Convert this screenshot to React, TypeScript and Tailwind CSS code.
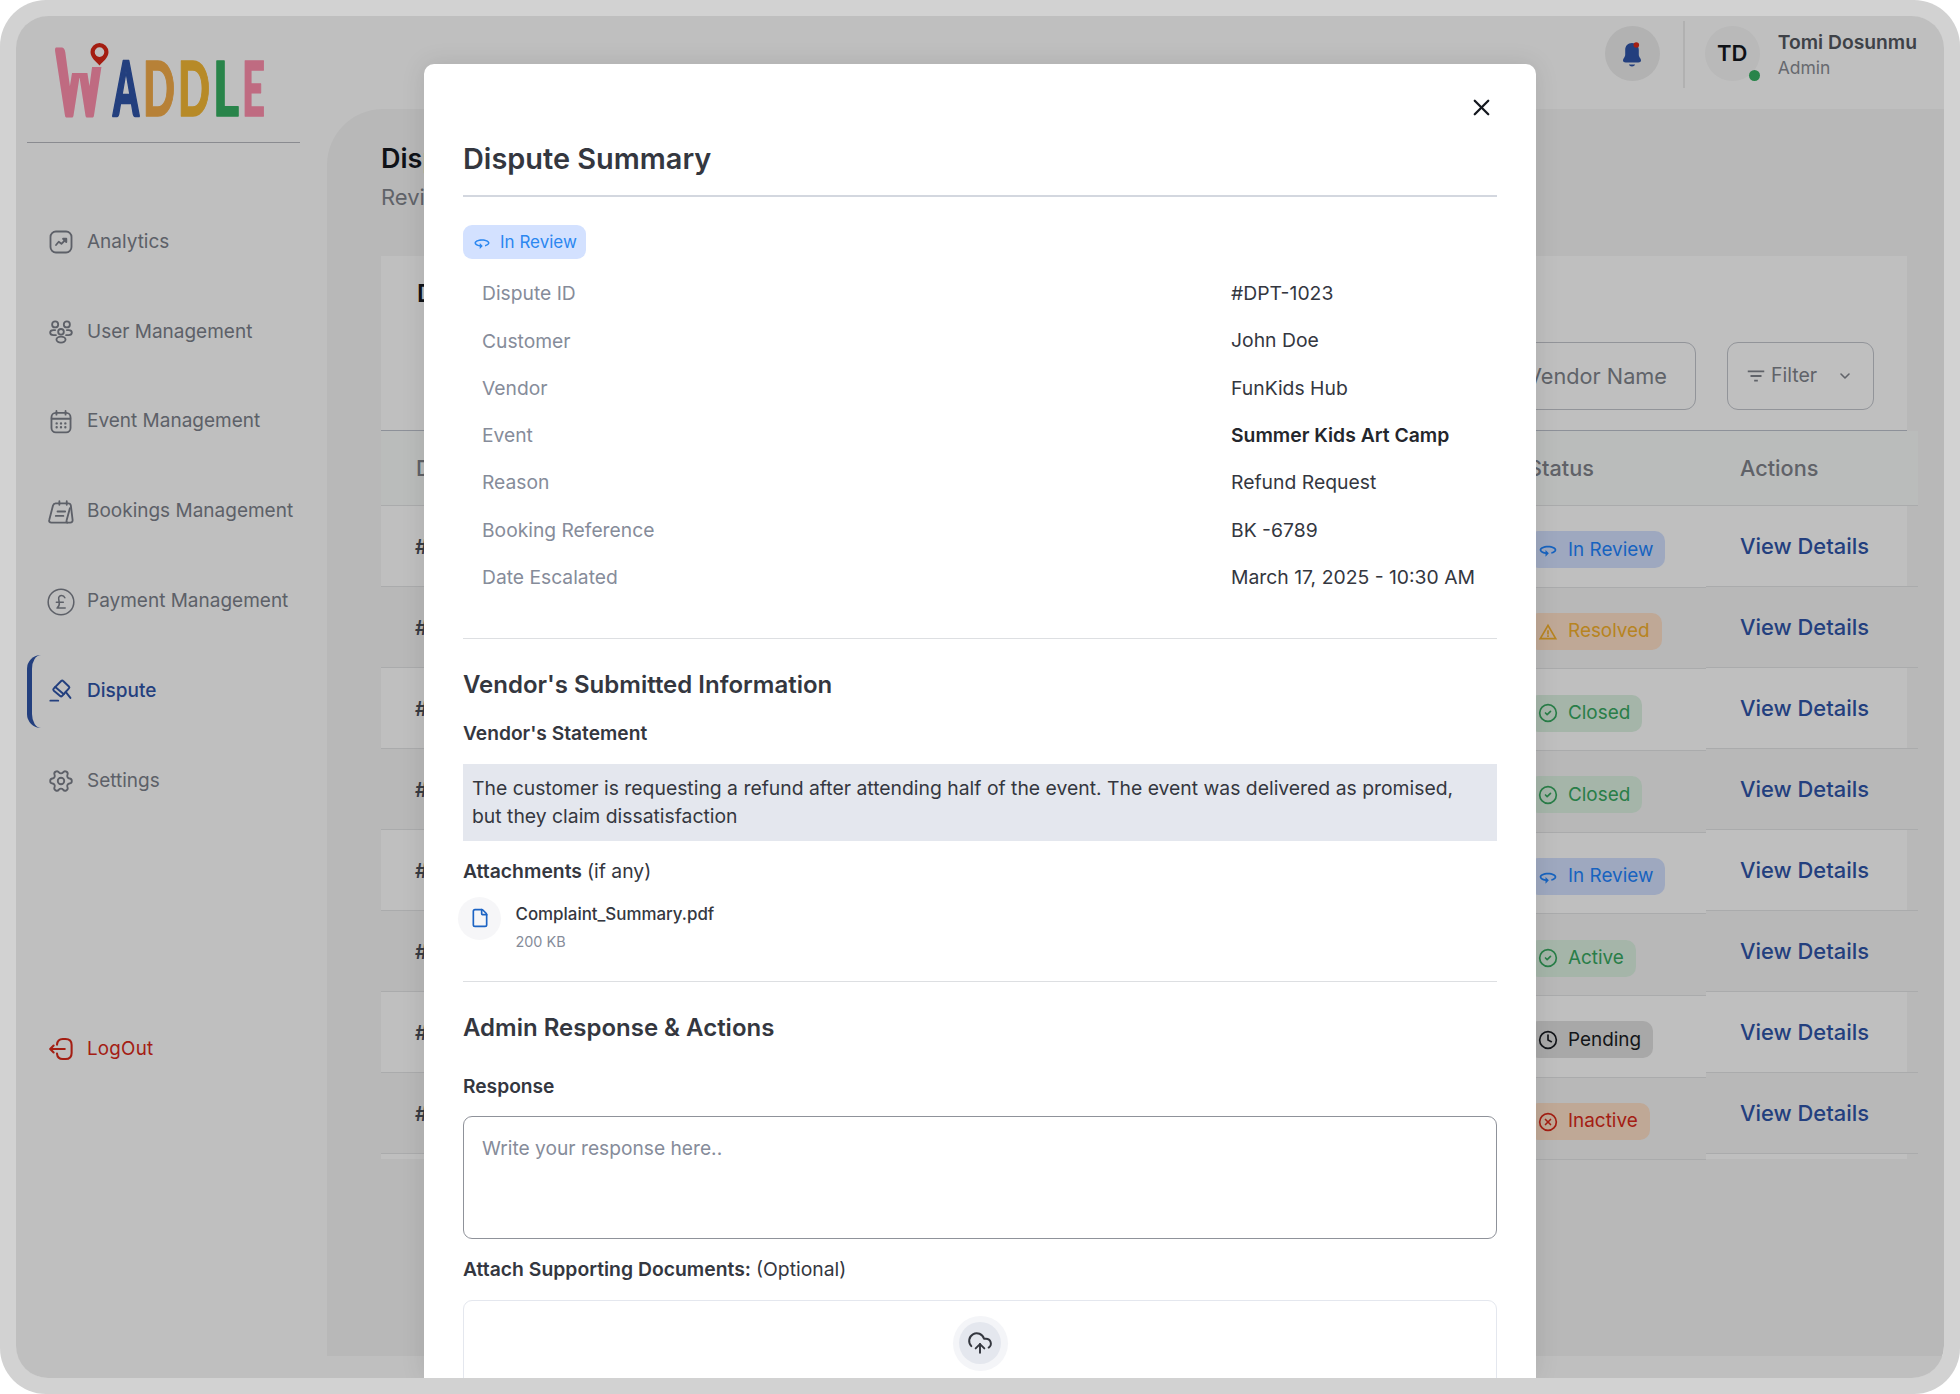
import React from 'react';
import { ChevronDown, CircleCheck, CircleX, Clock, CloudUpload, File, Settings, X } from 'lucide-react';
import { Md360, MdFilterList, MdWarningAmber } from 'react-icons/md';

type Status = 'In Review' | 'Resolved' | 'Closed' | 'Active' | 'Pending' | 'Inactive';

const STATUSES: Status[] = ['In Review', 'Resolved', 'Closed', 'Closed', 'In Review', 'Active', 'Pending', 'Inactive'];

const DETAILS = [
  { label: 'Dispute ID', value: '#DPT-1023' },
  { label: 'Customer', value: 'John Doe' },
  { label: 'Vendor', value: 'FunKids Hub' },
  { label: 'Event', value: 'Summer Kids Art Camp', strong: true },
  { label: 'Reason', value: 'Refund Request' },
  { label: 'Booking Reference', value: 'BK -6789' },
  { label: 'Date Escalated', value: 'March 17, 2025 - 10:30 AM' },
];

const svgProps = {
  viewBox: '0 0 24 24',
  fill: 'none',
  stroke: 'currentColor',
  strokeWidth: 1.7,
  strokeLinecap: 'round' as const,
  strokeLinejoin: 'round' as const,
};

const AnalyticsIcon = () => (
  <svg {...svgProps} className="w-[26px] h-[26px]">
    <rect x="2.3" y="2.3" width="19.4" height="19.4" rx="5" />
    <path d="M7.4 14.8l2.5-3 2.5 1.9 4-4" />
    <path fill="currentColor" d="M13.9 9h3v3z" />
  </svg>
);

const UsersIcon = () => (
  <svg {...svgProps} className="w-[26px] h-[26px]">
    <circle cx="6.6" cy="5" r="2.8" />
    <circle cx="17.4" cy="5" r="2.8" />
    <circle cx="12" cy="11.8" r="2.6" />
    <ellipse cx="12" cy="19" rx="4.2" ry="2.8" />
    <path d="M7.3 14.9H5.1c-2 0-3.1-1.1-3.1-2.4s1.2-2.3 3-2.3h1.6M16.7 14.9h2.2c2 0 3.1-1.1 3.1-2.4s-1.2-2.3-3-2.3h-1.6" />
  </svg>
);

const EventIcon = () => (
  <svg {...svgProps} className="w-[26px] h-[26px]">
    <rect x="3.2" y="3.6" width="17.6" height="18" rx="4" />
    <path d="M7.8 1.8v3.4M16.2 1.8v3.4M3.4 9h17.2" />
    <path strokeWidth="2.2" d="M8 13.3h.01M12 13.3h.01M16 13.3h.01M8 16.9h.01M12 16.9h.01M16 16.9h.01" />
  </svg>
);

const BookingIcon = () => (
  <svg {...svgProps} className="w-[26px] h-[26px]">
    <path d="M7 4h11.6c1.6 0 2.3.8 2.5 2.1l1.6 13.1c.2 1.6-.7 2.6-2.2 2.6H3.2c-1.7 0-2.5-1-2-2.6L4.6 6c.4-1.3 1.1-2 2.4-2z" />
    <path d="M10.5 2v3.4M17.3 2v3.4M8.8 11.5h7M7.2 15.6h7M20.2 8.5l-3 11.2c-.4 1.3-.3 1.7.6 2.1" />
  </svg>
);

const PaymentIcon = () => (
  <svg {...svgProps} strokeWidth="1.3" className="w-7 h-7">
    <circle cx="12" cy="12" r="11" />
    <path d="M15.3 8.3c-.6-1.4-1.7-1.8-2.8-1.8-1.7 0-2.7 1.2-2.5 2.9l.5 3.1c.3 2-.3 3.5-1.9 4.7h7M8 12.2h6" />
  </svg>
);

const GavelIcon = () => (
  <svg {...svgProps} strokeWidth="1.8" className="w-[26px] h-[26px]">
    <path d="M12.2 2.8q.9-.9 1.8 0l5.3 5q.9.9 0 1.8l-6.2 6.9q-.9.9-1.9.1l-5.8-4.9q-1-.9-.2-1.9z" />
    <path d="M6.7 8.3l7.9 6.6M16.3 12.8l4.4 5.6M2.2 20.9h7.2" />
  </svg>
);

const LogoutIcon = () => (
  <svg {...svgProps} strokeWidth="1.9" className="w-[26px] h-[26px]">
    <path d="M8.3 8c.3-3.6 2-5.2 5.3-5.2h2.6c3.7 0 5.6 1.9 5.6 5.6v7.2c0 3.7-1.9 5.6-5.6 5.6h-2.6c-3.3 0-5-1.6-5.3-5" />
    <path d="M15.5 12H2.3M5.2 8.8L2 12l3.2 3.2" />
  </svg>
);

const BellIcon = () => (
  <svg viewBox="0 0 24 28" className="w-6 h-7">
    <path fill="#2f55a9" d="M12 3c-4.3 0-6.8 3-6.8 7v4.500c0 1.400-.500 2.300-1.300 3.600-.600 1-.900 1.600-.900 2.400 0 1.300 1.100 2 2.700 2h12.600c1.600 0 2.700-.700 2.700-2 0-.800-.300-1.400-.900-2.400-.800-1.300-1.300-2.200-1.300-3.600V10c0-4-2.500-7-6.800-7z" />
    <path fill="#2f55a9" d="M8.800 24.500h6.400c-.600 1.300-1.700 2-3.200 2s-2.600-.700-3.200-2z" />
    <circle cx="16.300" cy="5" r="2.800" fill="#db2819" />
  </svg>
);

const Logo = () => (
  <svg viewBox="0 0 220 80" className="w-[220px] h-20 overflow-visible font-['Lato']" fontWeight="900" fontSize="76" strokeWidth="1.5" strokeLinejoin="round">
    <defs>
      {/* middle peak and right stem of the W stay lower than the left one */}
      <clipPath id="stem">
        <path d="M-4 0H18V34H38V28H62V84H-4z" />
      </clipPath>
    </defs>
    <g clipPath="url(#stem)">
      <text x="5" y="75.5" fontSize="89" textLength="47" lengthAdjust="spacingAndGlyphs" fill="#ff8fad" stroke="#ff8fad" strokeWidth="5">W</text>
    </g>
    <text x="62" y="76.5" textLength="26" lengthAdjust="spacingAndGlyphs" fill="#2f55a9" stroke="#2f55a9" strokeWidth="2.5">A</text>
    <text x="92" y="76.5" textLength="32" lengthAdjust="spacingAndGlyphs" fill="#f5ad4a" stroke="#f5ad4a">D</text>
    <text x="127" y="76.5" textLength="32" lengthAdjust="spacingAndGlyphs" fill="#f5b835" stroke="#f5b835">D</text>
    <text x="162" y="76.5" textLength="26" lengthAdjust="spacingAndGlyphs" fill="#37b163" stroke="#37b163">L</text>
    <text x="191" y="76.5" textLength="23" lengthAdjust="spacingAndGlyphs" fill="#ff8fad" stroke="#ff8fad">E</text>
    <path fill="#db2819" fillRule="evenodd" d="M48.5 4a9 9 0 0 0-9 9c0 5.500 5 9 9 13.500 4-4.500 9-8 9-13.500a9 9 0 0 0-9-9zm0 4.300a4.800 4.800 0 1 1 0 9.600 4.800 4.800 0 0 1 0-9.600z" />
  </svg>
);

const NAV = [
  { label: 'Analytics', icon: <AnalyticsIcon /> },
  { label: 'User Management', icon: <UsersIcon /> },
  { label: 'Event Management', icon: <EventIcon /> },
  { label: 'Bookings Management', icon: <BookingIcon /> },
  { label: 'Payment Management', icon: <PaymentIcon /> },
  { label: 'Dispute', icon: <GavelIcon />, active: true },
  { label: 'Settings', icon: <Settings className="w-[26px] h-[26px] rotate-90" strokeWidth={1.7} /> },
];

const getStatusStyles = (status: Status) => {
  switch (status) {
    case 'In Review':
      return { badge: 'bg-[#d3e1ff] text-[#1f84ff]', icon: <Md360 className="w-5 h-5" /> };
    case 'Resolved':
      return { badge: 'bg-[#ffe0c8] text-[#f5b02c]', icon: <MdWarningAmber className="w-5 h-5" /> };
    case 'Pending':
      return { badge: 'bg-[#e0e0e0] text-[#1a1d23]', icon: <Clock className="w-5 h-5" /> };
    case 'Inactive':
      return { badge: 'bg-[#ffe0c8] text-[#db2819]', icon: <CircleX className="w-5 h-5" /> };
    default:
      return { badge: 'bg-[#dcf2e2] text-[#37a860]', icon: <CircleCheck className="w-5 h-5" /> };
  }
};

const Sidebar = () => (
  <aside className="w-[311px] shrink-0 pl-[11px]">
    <div className="h-[127px] w-[273px] border-b border-[#b8bac0] pt-[23px] pl-[24px]">
      <Logo />
    </div>
    <nav className="pt-[54px]">
      {NAV.map((item) => (
        <div key={item.label} className="h-[89.9px] flex items-center">
          <div
            className={`h-[73px] w-full flex items-center gap-2 text-[19px] ${
              item.active ? 'border-l-[5px] border-[#2f55a9] rounded-l-[14px] pl-[10px] text-[#2f55a9] font-medium' : 'pl-[15px] text-[#7d818b]'
            }`}
          >
            <span className="w-[38px] flex justify-center">{item.icon}</span>
            <span className="-ml-px">{item.label}</span>
          </div>
        </div>
      ))}
    </nav>
    <div className="mt-[178px] h-[90px] flex items-center gap-2 pl-[15px] text-[18.800px] text-[#db2819]">
      <span className="w-[38px] flex justify-center"><LogoutIcon /></span>
      <span className="-ml-px tracking-[0.012em]">LogOut</span>
    </div>
  </aside>
);

const TopBar = () => (
  <header className="h-[93px] pt-[5px] pr-[27px] flex items-start justify-end">
    <div className="mt-[5px] mr-[23px] w-[55px] h-[55px] rounded-full bg-[#eeeeee] flex items-center justify-center">
      <BellIcon />
    </div>
    <div className="w-0.5 h-[67px] bg-[#ededed] mr-5" />
    <div className="relative mt-[5px] w-[55px] h-[55px] rounded-full bg-[#f7f7f7] flex items-center justify-center text-[22px] font-semibold text-[#14181f]">
      TD
      <span className="absolute right-0 bottom-0 w-[11px] h-[11px] rounded-full bg-[#37b163]" />
    </div>
    <div className="ml-[18px] mt-[7px]">
      <div className="h-7 leading-7 text-[19.300px] font-semibold text-[#53575f]">Tomi Dosunmu</div>
      <div className="h-6 leading-6 text-[17.500px] text-[#8a8d94]">Admin</div>
    </div>
  </header>
);

const StatusBadge: React.FC<{ status: Status }> = ({ status }) => {
  const styles = getStatusStyles(status);
  return (
    <span className={`h-[37px] inline-flex items-center gap-2.5 pl-2.5 pr-3 rounded-[10px] text-[18.900px] ${styles.badge}`}>
      {styles.icon}
      {status}
    </span>
  );
};

const DisputeTable = () => (
  <section className="w-[1526px] h-[903px] bg-white">
    <div className="h-[175px] border-b border-[#bcc2cc] pl-9 pr-[33px] pt-[16px]">
      <h2 className="h-[42px] leading-[43px] text-[24px] font-semibold text-[#14181f]">Disputes</h2>
      <div className="mt-[28px] flex justify-end gap-[31px]">
        <div className="w-[420px] h-[68px] rounded-[11px] border border-[#c3c6cd] flex items-center justify-end pr-[28px] text-[21.700px] text-[#80848c]">
          Search by Vendor Name
        </div>
        <div className="w-[147px] h-[68px] rounded-[11px] border border-[#c3c6cd] flex items-center pl-[17px] text-[19.500px] text-[#80848c]">
          <MdFilterList className="w-[22px] h-[22px] mr-1" />
          Filter
          <ChevronDown className="w-4 h-4 ml-[20px]" strokeWidth={2.4} />
        </div>
      </div>
    </div>
    <div className="w-[1537px] h-[75px] bg-[#f9fbfa] border-b border-[#e3e4e6] flex items-center text-[21.700px] font-medium text-[#80838b]">
      <span className="w-[1114px] pl-[35px]">Dispute ID</span>
      <span className="w-[211px] pl-[33px]">Status</span>
      <span className="pl-[34px]">Actions</span>
    </div>
    <div className="flex w-[1537px]">
      <div className="w-[1114px]">
        {STATUSES.map((_, i) => (
          <div key={i} className={`h-[81px] flex items-center pl-[34px] pt-px border-b border-[#e3e4e6] text-[20px] font-semibold text-[#4b4f58] ${i % 2 ? 'bg-[#f6f6f6]' : ''}`}>
            #DPT-1023
          </div>
        ))}
      </div>
      <div className="w-[211px]">
        {STATUSES.map((status, i) => (
          <div key={i} className={`h-[81.700px] flex items-center pl-[33px] pt-[7px] border-b border-[#e3e4e6] ${i % 2 ? 'bg-[#f6f6f6]' : ''}`}>
            <StatusBadge status={status} />
          </div>
        ))}
      </div>
      <div className="w-[212px]">
        {STATUSES.map((_, i) => (
          <div key={i} className={`h-[81px] flex items-center pl-[34px] pt-px border-b border-[#e3e4e6] text-[21.900px] font-medium text-[#2f55a9] ${i % 2 ? 'bg-[#f6f6f6]' : ''}`}>
            View Details
          </div>
        ))}
      </div>
    </div>
  </section>
);

const DisputeModal = () => (
  <div className="absolute left-[408px] top-12 w-[1112px] h-[1314px] overflow-hidden rounded-t-[10px] bg-white px-[39px] text-[19.350px] text-[#34373f] shadow-[0_0_24px_rgba(0,0,0,0.100)]">
    <div className="h-[59px] pt-[28px] pr-0.5 flex items-center justify-end">
      <X className="w-[27px] h-[27px] text-[#14181f]" strokeWidth={2} />
    </div>
    <h1 className="h-[72px] flex items-center text-[28.900px] font-semibold">Dispute Summary</h1>
    <div className="h-0.5 bg-[#d3d7df]" />

    <div className="mt-7 w-[123px] h-[34px] pt-px rounded-[9px] bg-[#d3e1ff] text-[#2b87f0] flex items-center pl-2.5 gap-[9px] text-[17px]">
      <Md360 className="w-[18px] h-[18px]" />
      In Review
    </div>
    <dl className="mt-[11px]">
      {DETAILS.map((row) => (
        <div key={row.label} className="h-[47.300px] flex items-center pl-[19px]">
          <dt className="w-[749px] text-[19.250px] text-[#868c9a]">{row.label}</dt>
          <dd className={row.strong ? 'font-semibold text-[#24262c]' : ''}>{row.value}</dd>
        </div>
      ))}
    </dl>
    <div className="mt-[36.500px] h-px bg-[#dddfe2]" />

    <h2 className="mt-[26px] h-10 flex items-center text-[24px] font-semibold">Vendor's Submitted Information</h2>
    <h3 className="mt-[14px] h-[30px] flex items-center text-[19.200px] font-semibold">Vendor's Statement</h3>
    <p className="mt-[15px] h-[77px] bg-[#e4e7ee] pl-[9px] pt-[10px] leading-7">
      The customer is requesting a refund after attending half of the event. The event was delivered as promised,
      <br />
      but they claim dissatisfaction
    </p>
    <div className="mt-[16px] h-[30px] flex items-center gap-[5px]">
      <span className="font-semibold">Attachments</span> (if any)
    </div>
    <div className="mt-[10px] -ml-[5px] flex">
      <span className="w-[43px] h-[43px] rounded-full bg-[#f6f6f8] flex items-center justify-center text-[#1d64c4]">
        <File className="w-5 h-5" />
      </span>
      <div className="ml-[14.500px] mt-1">
        <div className="h-[26px] leading-[26px] text-[16.900px] font-medium">Complaint_Summary.pdf</div>
        <div className="mt-0.5 h-[26px] leading-[26px] text-[14.400px] text-[#868c9a]">200 KB</div>
      </div>
    </div>
    <div className="mt-[26px] h-px bg-[#dddfe2]" />

    <h2 className="mt-[26px] h-10 flex items-center text-[24px] font-semibold">Admin Response & Actions</h2>
    <label className="mt-[24px] h-[30px] flex items-center text-[19.200px] font-semibold">Response</label>
    <div className="mt-[14px] h-[123px] rounded-[9px] border border-[#8f929a] px-[18px] pt-[17px] text-[#868c9a] text-[19.200px] leading-7">
      Write your response here..
    </div>
    <div className="mt-[16px] h-[30px] flex items-center gap-[5px]">
      <span className="font-semibold">Attach Supporting Documents:</span> (Optional)
    </div>
    <div className="mt-[15px] h-[160px] rounded-[9px] border border-[#e4e7ee] flex items-start justify-center pt-[15px]">
      <span className="w-[55px] h-[55px] rounded-full bg-[#f4f5f8] flex items-center justify-center">
        <span className="w-[42px] h-[42px] rounded-full bg-[#e4e7ee] flex items-center justify-center">
          <CloudUpload className="w-[26px] h-[26px]" strokeWidth={1.8} />
        </span>
      </span>
    </div>
  </div>
);

export default function App() {
  return (
    <div className="w-[1960px] h-[1394px] bg-white">
      <div className="w-full h-full p-4 rounded-[46px] bg-[#d2d2d2] font-['Inter',sans-serif]">
        <div className="relative w-full h-full overflow-hidden rounded-[32px] bg-white flex">
          <Sidebar />
          <div className="flex-1 min-w-0">
            <TopBar />
            <main className="h-[1247px] rounded-tl-[56px] bg-[#f6f6f6] pl-[54px] pt-[30px]">
              <h1 className="h-10 leading-10 text-[27px] font-semibold text-[#14181f]">Dispute Management</h1>
              <p className="h-[38px] mb-[39px] leading-[36px] text-[22px] text-[#80848c]">Review and resolve disputes</p>
              <DisputeTable />
            </main>
          </div>
          <div className="absolute inset-0 bg-black/25" />
          <DisputeModal />
        </div>
      </div>
    </div>
  );
}
